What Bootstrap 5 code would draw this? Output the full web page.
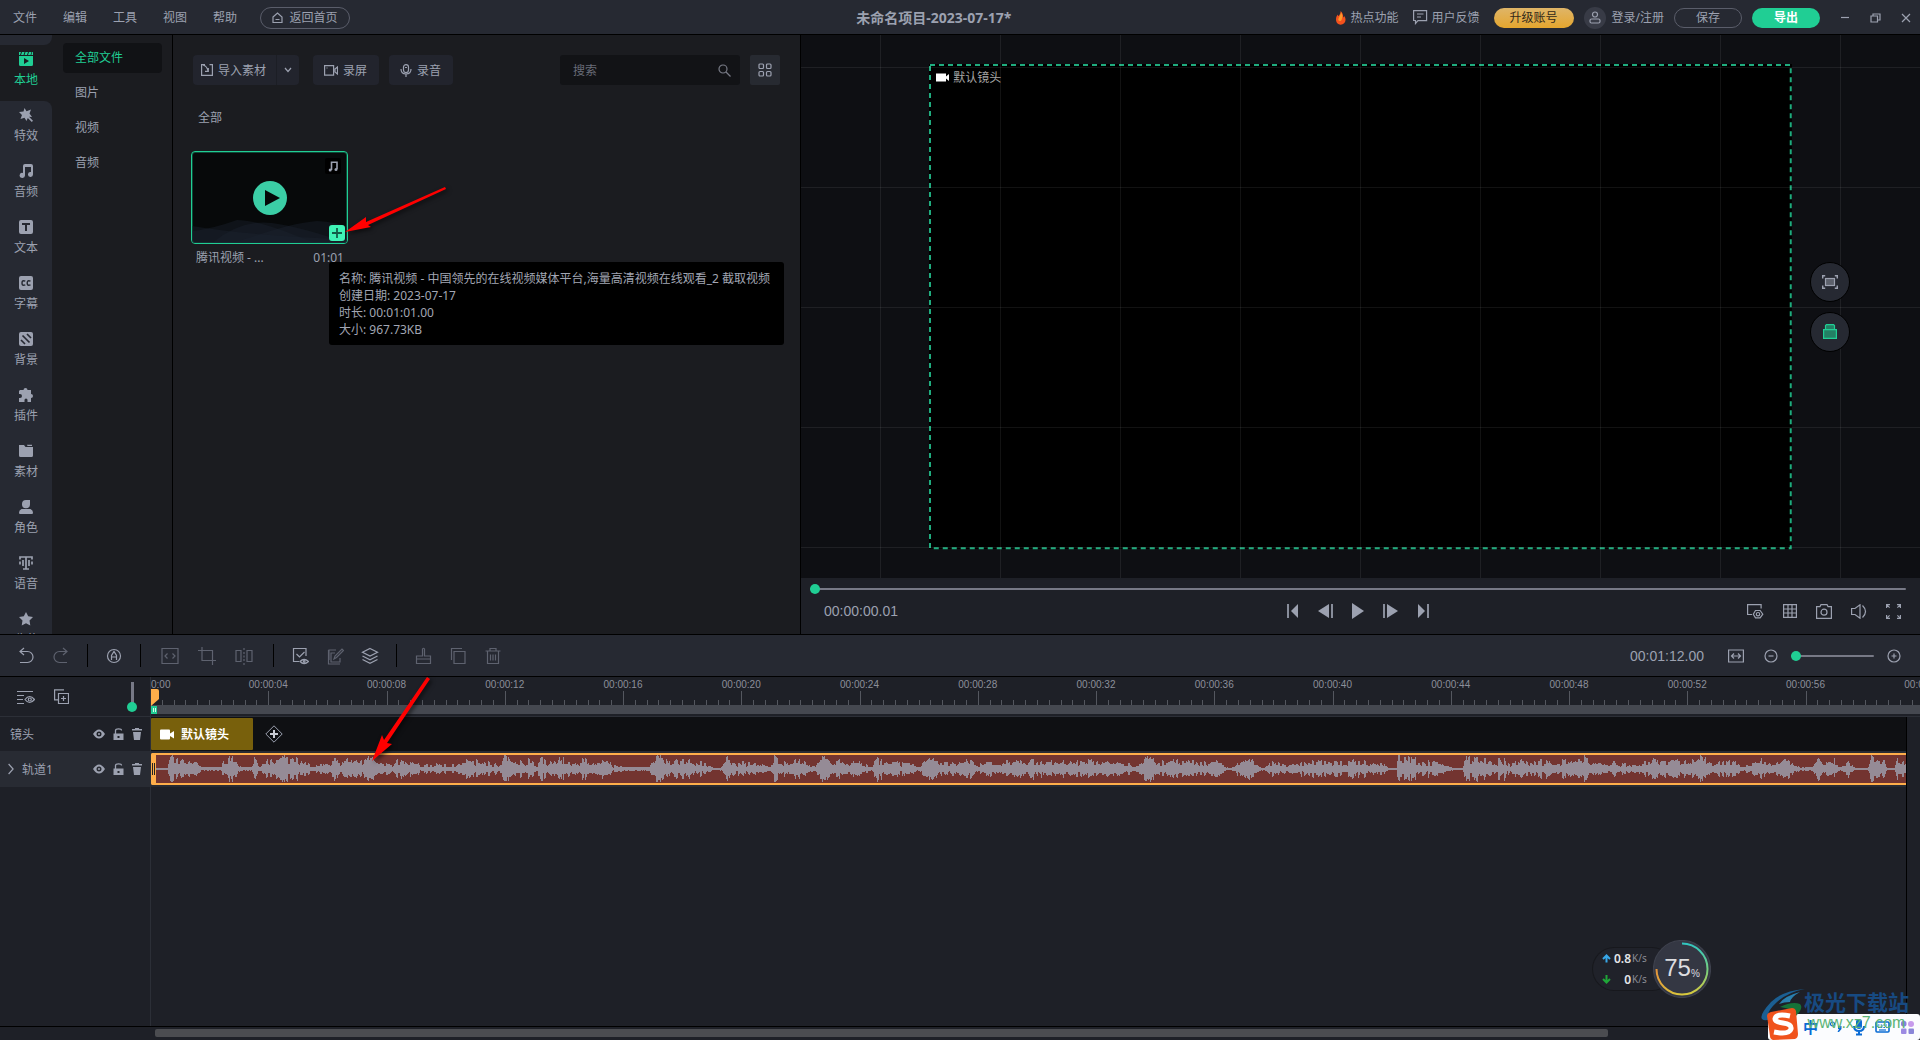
<!DOCTYPE html>
<html lang="zh-CN" data-bs-theme="dark">
<head>
<meta charset="utf-8">
<meta name="viewport" content="width=device-width, initial-scale=1">
<title>未命名项目-2023-07-17*</title>
<link rel="stylesheet" href="https://cdn.jsdelivr.net/npm/bootstrap@5.3.0/dist/css/bootstrap.min.css">
<style>
:root{--bar:#262932;--panel:#1b1c20;--deep:#0e0f13;--fg:#9ca1b0;--green:#20ce94;--orange:#ffae4a;--line:#2c2f37}
body{height:100vh;overflow:hidden;background:#1e2027;color:var(--fg);font:12px/17px "Noto Sans","Noto Sans CJK SC",sans-serif}
svg{display:block;flex:none;fill:none;stroke:currentColor;stroke-width:1.2}
svg.solid,.solid{fill:currentColor;stroke:none}
svg.flat{stroke:none}
button{font:inherit;color:inherit;background:none;border:0;padding:0}
a{color:inherit;text-decoration:none}
.latin{font-family:"Liberation Sans",sans-serif}
/* top bar */
.topbar{flex:none;height:35px;background:var(--bar);border-bottom:1px solid #000;padding-top:1px}
.menu-link{width:50px;padding-left:13px}
.pill{border:1px solid #5a5d6a;border-radius:11px;height:22px}
.home-pill{width:90px;gap:6px;margin-left:10px}
.gap-before{flex:506 1 0}.gap-after{flex:323 1 0}
.proj{font-size:14px;font-weight:700;margin:0;line-height:18px;color:var(--fg)}
.links-row{gap:14px}
.btn-row{gap:10px;padding-left:10px}
.upgrade{width:80px;height:20px;border-radius:10px;background:linear-gradient(#dfb568,#e5a62e);color:#33291a}
.avatar-dot{width:22px;height:22px;border-radius:50%;background:#383b46;margin-right:6px}
.save-pill{width:68px;height:20px}
.export{width:68px;height:20px;border-radius:10px;background:var(--green);color:#fff;font-weight:700}
.winbtns{gap:20px;margin-left:20px;padding-right:9px}
/* upper half */
.upper{flex:40 1 0;min-height:0}
.rail{width:52px;flex:none;background:var(--panel);overflow:hidden}
.rail-cap{height:10px;flex:none;background:var(--bar);border-bottom-right-radius:8px}
.rail-rest{background:var(--bar);border-top-right-radius:8px;flex:none}
.rail-btn{width:52px;height:56px;padding-top:7px;gap:5px;flex:none}
.rail-btn.on,.subnav a.active{color:var(--green)}
.subnav{width:121px;flex:none;background:var(--panel);border-right:1px solid #000;padding:8px 10px 0 11px}
.subnav a{display:block;height:30px;line-height:30px;margin-bottom:5px;padding-left:12px;border-radius:4px}
.subnav a.active{background:#111215}
.media{background:var(--panel);min-width:0;padding:20px 20px 0 20px}
.tbtn{background:#22242d;height:30px;border-radius:4px;gap:5px;padding:0 12px 0 11px}
.tbtn.first-part{width:84px;padding:0 0 0 8px;border-radius:4px 0 0 4px;border-right:1px solid #1c1e25}
.tbtn.drop-part{width:22px;padding:0;border-radius:0 4px 4px 0;margin-right:14px}
.tbtn.mic{margin-left:10px}
.searchbox{width:180px;height:30px;background:#121316;border-radius:3px;padding:0 9px 0 11px}
.searchbox input{background:none;border:0;outline:0;color:var(--fg);font:inherit;min-width:0}
.searchbox input::placeholder{color:#686c78;opacity:1}
.viewbtn{width:30px;height:30px;background:#272a31;border-radius:2px;margin-left:10px}
.all-label{margin:24px 0 0 5px;font:inherit;color:var(--fg)}
.clip-card{width:157px;margin:25px 0 0 -2px}
.thumb{height:93px;border:1px solid var(--green);box-shadow:inset 0 0 0 1px #0d4a38;border-radius:4px;background:#07090a;overflow:hidden}
.thumb>svg.hills{left:0;bottom:0;width:100%;height:26px}
.note-tag{right:6px;top:6px;width:16px;height:16px;background:#000;border-radius:2px}
.add-tag{right:2px;bottom:2px;width:16px;height:16px;background:#3ff3b5;border-radius:3px;color:#125d47}
.play-dot{color:#3bcea6}
.clip-meta{padding:5px 4px 0 5px}
.info-tip{left:329px;top:262px;width:455px;background:#000;border-radius:3px;padding:8px 10px 7px;color:#a2a6b3;white-space:nowrap;z-index:5}
/* preview */
.preview{border-left:1px solid #000;min-width:0}
.stage{flex:1 1 0;min-height:0;background:var(--deep)}
.stage::after{content:"";position:absolute;inset:0;pointer-events:none;background:linear-gradient(90deg,#ffffff12 1px,transparent 1px) 79px 0/120px 120px,linear-gradient(#ffffff12 1px,transparent 1px) 0 32px/120px 120px}
.frame{width:77.1%;aspect-ratio:16/9;background:#000;color:#a4a4a4}
.frame>svg.edge{inset:0;width:100%;height:100%;stroke:#1fac7e;stroke-width:2;overflow:visible}
.edge rect{width:calc(100% - 2px);height:calc(100% - 2px)}
.frame-label{padding:5px 7px;gap:4px}
.side-tools{right:70px;top:50%;transform:translateY(-50%);gap:10px;z-index:2}
.side-tools button{width:40px;height:40px;border-radius:50%;background:var(--bar);border:1px solid #000}
.player{height:56px;flex:none;background:#1e2027;padding:5px 14px 0 9px}
.player-row{display:grid;grid-template-columns:1fr auto 1fr;height:32px}
.player-row .timecode{padding-left:14px}
.transport{gap:19px}
.view-tools{gap:19px;padding-right:5px}
.timecode{font-size:14px;line-height:18px}
/* sliders */
input[type=range]{-webkit-appearance:none;appearance:none;background:none;height:12px;margin:0;display:block}
input[type=range]::-webkit-slider-runnable-track{height:2px;background:#777986;border-radius:1px}
input[type=range]::-webkit-slider-thumb{-webkit-appearance:none;width:10px;height:10px;margin-top:-4px;border-radius:50%;background:var(--green)}
.seek{width:100%}
.zoomr{width:83px;margin:0 13px!important}
.vslide{width:10px;height:30px}
.vslide i{width:3px;height:21px;background:#777986}
.vslide b{width:10px;height:10px;border-radius:50%;background:var(--green);margin-top:-1px}
/* lower half */
.lower{flex:27 1 0;min-height:0;border-top:1px solid #000}
.toolrow{height:42px;flex:none;background:var(--bar);border-bottom:1px solid #000;padding:0 19px 0 17px}
.toolset,.toolrow .grp{gap:17px}
.toolrow .grp-wide{gap:19px;padding:0 3px}
.toolrow .tb{width:18px;height:20px}
.tb.dim{color:#5e626f}
.vsep{width:1px;height:23px;background:#000}
.fitbtn{margin:0 20px 0 24px}
.heads{width:151px;flex:none;border-right:1px solid var(--line)}
.lane{flex:1 1 0;min-width:0;overflow:hidden}
.rulerrow{height:40px;flex:none;border-bottom:1px solid var(--line)}
.rulerrow .heads{padding:0 13px 0 17px;gap:19px}
.ticks{left:0;top:0;width:100%;height:29px;stroke:#54575f;stroke-width:1}
.labels{font-size:10px;line-height:13px;color:#8c8f9a;padding-top:1px}
.labels span{flex:none;text-align:center}
.labels span:first-child{text-align:left}
.rangebar{left:0;right:0;bottom:2px;height:9px;background:#454850}
.rangebar b{display:flex;gap:1px;justify-content:center;align-items:center;width:6px;height:8px;background:var(--green);margin-top:1px}
.rangebar b::before,.rangebar b::after{content:"";width:1px;height:4px;background:#d9f7ec}
.playhead{left:0;top:12px}
.trk{flex:none}
.trk .heads{padding:0 8px 0 10px}
.trk-shot{height:34px}.trk-shot .lane{background:#0f1013;padding:1px 0}
.trk-audio{height:36px}.trk-audio .heads,.trk-audio .lane{background:#282b33}
.trk-audio .heads{padding-left:8px}
.trk-audio .lane{padding:2px 0}
.tools3{gap:8px}
.gutter{width:14px;flex:none;border-left:1px solid #000;background:#1e2027}
.shot{width:102px;height:32px;background:#78600c;border-radius:1px;color:#fff;font-weight:700;padding-left:9px;gap:7px;margin-right:12px}
.wavebox{height:32px;background:#733430;border:2px solid var(--orange);border-right:0;border-left-width:5px;border-radius:2px 0 0 2px}
.wavebox svg{width:100%;height:28px;stroke:#958b96;stroke-width:1}
.grip{left:-4px;top:8px;width:3px;height:12px;border:solid #222;border-width:0 1px}
.hscroll{height:14px;flex:none;border-top:1px solid #000;padding:2px 0 0 155px}
.hscroll div{width:82.3%;height:8px;border-radius:2px;background:#4b4c50}
/* overlays */
.arrows{left:0;top:0;z-index:8;pointer-events:none;filter:drop-shadow(2px 2px 2px #0009)}
.netbox{right:209px;bottom:41px;width:118px;height:60px;z-index:9}
.netpill{left:0;top:9px;width:80px;height:42px;border-radius:21px;background:#20222a;box-shadow:0 0 0 1px #17181d;padding-left:9px}
.netpill div{height:21px}
.netpill strong{color:#e4e5e8;width:20px;text-align:right;font-weight:600;line-height:16px}
.netpill small{font-size:10px;color:#8b8d95;padding-left:1px}
.netdial{right:0;top:1px}
.pct{right:0;top:0;width:58px;height:58px;color:#dcdde0}
.pct span{font-size:24px;line-height:28px}
.pct small{font-size:10px;padding-top:10px}
.site{right:11px;bottom:8px;width:105px;color:#174a82;font:700 21px/26px "Noto Sans CJK SC",sans-serif;z-index:9;pointer-events:none}
.site em{display:block;font:normal 16px/18px "Liberation Sans",sans-serif;color:#5db476;text-align:center}
.ime{right:0;bottom:0;width:152px;height:26px;background:#fbfcfe;border-radius:3px;z-index:8;padding:0 6px 0 35px;color:#0a6bd4}
.ime b{font-size:15px;line-height:26px}
.logos{right:115px;bottom:0;z-index:10}
</style>
<script src="https://cdn.jsdelivr.net/npm/bootstrap@5.3.0/dist/js/bootstrap.bundle.min.js"></script>
</head>
<body class="d-flex flex-column position-relative">

<header class="topbar d-flex align-items-center">
  <nav class="d-flex align-items-center">
    <a href="#" class="menu-link">文件</a><a href="#" class="menu-link">编辑</a><a href="#" class="menu-link">工具</a><a href="#" class="menu-link">视图</a><a href="#" class="menu-link">帮助</a>
    <button class="pill home-pill d-flex align-items-center justify-content-center"><svg width="11" height="12"><path d="M1 5 5.500 1 10 5v5.500H1zM3.500 7.500h4"/></svg>返回首页</button>
  </nav>
  <div class="gap-before"></div>
  <h1 class="proj">未命名项目-2023-07-17*</h1>
  <div class="gap-after"></div>
  <div class="d-flex align-items-center">
    <div class="links-row d-flex align-items-center">
      <a href="#" class="d-flex align-items-center gap-1"><svg class="flat" width="12" height="14"><path fill="#f4511d" d="M5.500 0c.5 2-.5 3-2 5C2.800 4.800 3 4 2.800 3.500 1.500 5 1 6.500 1 8.500c0 3 2 5.200 4.700 5.200s4.800-2 4.800-4.900c0-1.800-.6-2.800-1.300-3.800-.2 1-.5 1.300-1 1.500C8.500 4 7.500 1.500 5.500 0z"/><path fill="#fb9a2a" d="M5.800 1c.6 3-2.500 5-2.500 8 1 2 3.500 1 3.500-1C8 6 7.500 3 5.800 1z"/></svg>热点功能</a>
      <a href="#" class="d-flex align-items-center gap-1"><svg width="15" height="15"><path d="M.6.6h13v10H5L2.500 13.500v-3H.6zM4 4h6.500M4 7h4"/></svg>用户反馈</a>
      <button class="upgrade">升级账号</button>
    </div>
    <div class="btn-row d-flex align-items-center">
      <a href="#" class="d-flex align-items-center"><span class="avatar-dot d-flex align-items-center justify-content-center"><svg width="12" height="13"><circle cx="6" cy="3.500" r="2.500"/><rect x="1" y="8" width="10" height="4" rx="1.500"/></svg></span>登录/注册</a>
      <button class="pill save-pill">保存</button>
      <button class="export">导出</button>
    </div>
    <div class="winbtns d-flex align-items-center">
      <button aria-label="最小化"><svg width="10" height="10"><path d="M1 4.500h8"/></svg></button>
      <button aria-label="还原"><svg width="11" height="10"><path d="M1 3h6.500v6H1zM3 3V1h7v6H7.500"/></svg></button>
      <button aria-label="关闭"><svg width="10" height="10"><path d="m1 1 8 8M9 1 1 9"/></svg></button>
    </div>
  </div>
</header>

<main class="upper d-flex">
  <section class="col-5 d-flex">
    <div class="rail d-flex flex-column">
      <div class="rail-cap"></div>
      <button class="rail-btn on d-flex flex-column align-items-center"><svg width="14" height="14" class="solid"><path d="M0 0h2l-1 3H0zM3 0h2.500l-1 3H2zM6.500 0H9L8 3H5.500zM10 0h2.500l-1 3H9zM13.200 0H14v3h-1.700z"/><path fill-rule="evenodd" d="M0 4h14v8.500q0 1.500-1.500 1.500h-11Q0 14 0 12.500zM5 6v6l5-3z"/></svg>本地</button>
      <div class="rail-rest">
        <button class="rail-btn d-flex flex-column align-items-center"><svg width="14" height="14" class="solid"><path d="M5.500 0 7.500 3.200 12 1.500 10.500 5.500 13 9l-3-.2 4 4-1.200 1.200-4-4L7.500 13 5.500 9.800 1.500 11 3 7 0 4l4.500-.5z"/></svg>特效</button>
        <button class="rail-btn d-flex flex-column align-items-center"><svg width="14" height="14" class="solid"><path fill-rule="evenodd" d="M4 2q0-2 2-2h6q2 0 2 2v8.500A2.500 2.500 0 1 1 12 8V3H6v8.500A2.700 2.500 0 1 1 4 9z"/></svg>音频</button>
        <button class="rail-btn d-flex flex-column align-items-center"><svg width="14" height="14" class="solid"><path fill-rule="evenodd" d="M2 0h10q2 0 2 2v10q0 2-2 2H2q-2 0-2-2V2Q0 0 2 0zM3 3v2h3v6h2V5h3V3z"/></svg>文本</button>
        <button class="rail-btn d-flex flex-column align-items-center"><svg width="14" height="14"><rect width="14" height="14" rx="2" class="solid"/><path stroke="#262932" stroke-width="1.400" d="M6.300 5.300Q5.500 4.700 4.500 4.700 3 4.700 3 7t1.500 2.300q1 0 1.800-.6M11.500 5.300q-.8-.6-1.800-.6Q8.200 4.700 8.200 7t1.500 2.300q1 0 1.800-.6"/></svg>字幕</button>
        <button class="rail-btn d-flex flex-column align-items-center"><svg width="14" height="14"><rect width="14" height="14" rx="2" class="solid"/><path stroke="#262932" stroke-width="1.700" d="m2 8 4 4M3.500 3.500l7 7M8 2l4 4"/></svg>背景</button>
        <button class="rail-btn d-flex flex-column align-items-center"><svg width="14" height="14" class="solid"><path d="M1 2h3.500a2 2 0 0 1 4 0H12v4a2 2 0 0 1 0 4v4H8.500v-2a1.500 1.500 0 0 0-3 0v2H0v-4h1a2 2 0 0 0 0-4H0V3z"/></svg>插件</button>
        <button class="rail-btn d-flex flex-column align-items-center"><svg width="14" height="14" class="solid"><path d="M0 1h5l1.500 2H14v8.500q0 1.500-1.500 1.500h-11Q0 13 0 11.500zM8 .8h5V2H8.500z"/></svg>素材</button>
        <button class="rail-btn d-flex flex-column align-items-center"><svg width="14" height="14" class="solid"><path d="M7 0h4v4.500A4 4 0 0 1 3 4q0-4 4-4zM2.500 9h9q2.500 1 2.500 3.500 0 1.500-1 1.500H1q-1 0-1-1.500Q0 10 2.500 9z"/></svg>角色</button>
        <button class="rail-btn d-flex flex-column align-items-center"><svg width="14" height="14"><path stroke-width="1.700" d="M1 3.500V1h12v2.500M7 1v12M4 13h6M4 4v6M10 4v6M1 5.500v3M13 5.500v3"/></svg>语音</button>
        <button class="rail-btn d-flex flex-column align-items-center"><svg width="14" height="14" class="solid"><path d="m7 0 2.200 4.300 4.800.7-3.500 3.400.8 5.100L7 11.200l-4.300 2.300.8-5.100L0 5l4.800-.7z"/></svg>收藏</button>
      </div>
    </div>
    <nav class="subnav">
      <a href="#" class="active">全部文件</a><a href="#">图片</a><a href="#">视频</a><a href="#">音频</a>
    </nav>
    <div class="media flex-grow-1">
      <div class="d-flex align-items-center">
        <button class="tbtn first-part d-flex align-items-center"><svg width="12" height="12"><path d="M4 .6H.6v10.800h10.800V.6H8.500M2 1q4 1 5 6M7.300 4v3.300H4"/></svg>导入素材</button><button class="tbtn drop-part d-flex align-items-center justify-content-center" aria-label="更多导入"><svg width="8" height="6"><path d="m1 1 3 3.500L7 1"/></svg></button>
        <button class="tbtn d-flex align-items-center"><svg width="14" height="11"><path d="M.6.6h9v9.500h-9zM2.500 3h1M11 4l2.500-2v7L11 7z"/></svg>录屏</button>
        <button class="tbtn mic d-flex align-items-center"><svg width="12" height="13"><rect x="3.500" y=".6" width="5" height="8" rx="2.500"/><path d="M1 5q0 5 5 5t5-5M6 10v3M5 3.500h2"/></svg>录音</button>
        <label class="searchbox d-flex align-items-center ms-auto"><input class="flex-grow-1" type="text" placeholder="搜索" aria-label="搜索"><svg width="13" height="13" color="#787b86"><circle cx="5" cy="5" r="4"/><path d="m8 8 4.500 4.500"/></svg></label>
        <button class="viewbtn d-flex align-items-center justify-content-center" aria-label="网格视图"><svg width="14" height="14"><rect x="1" y="1" width="4.500" height="4.500" rx="1"/><rect x="8.500" y="1" width="4.500" height="4.500" rx="1"/><rect x="1" y="8.500" width="4.500" height="4.500" rx="1"/><rect x="8.500" y="8.500" width="4.500" height="4.500" rx="1"/></svg></button>
      </div>
      <h2 class="all-label">全部</h2>
      <div class="clip-card">
        <div class="thumb position-relative d-flex align-items-center justify-content-center">
          <svg class="hills flat position-absolute" viewBox="0 0 155 26" preserveAspectRatio="none"><g fill="#1b2230" fill-opacity=".4"><path d="M0 14Q20 12 45 3q20 0 60 16t50 2v5H0z"/><path d="M20 26Q50 2 80 6t75 20z"/><path d="M60 20Q100 6 125 4q20 1 30 6v16H40z"/><path d="M0 9q60 10 155 13v4H0z"/></g></svg>
          <svg class="play-dot flat position-relative" width="34" height="34"><circle cx="17" cy="17" r="17" class="solid"/><path fill="#050808" d="M12 9v16l15-8z"/></svg>
          <span class="note-tag position-absolute d-flex align-items-center justify-content-center"><svg width="10" height="11"><path stroke-width="1.600" d="M3.500 9V1.200h5.500V8"/><circle cx="2.200" cy="9" r="1.500" class="solid"/><circle cx="8" cy="8.500" r="1.500" class="solid"/></svg></span>
          <button class="add-tag position-absolute d-flex align-items-center justify-content-center" aria-label="添加到轨道"><svg width="10" height="10"><path stroke-width="1.800" d="M5 0v10M0 5h10"/></svg></button>
        </div>
        <div class="clip-meta d-flex justify-content-between"><span>腾讯视频 - ...</span><span>01:01</span></div>
      </div>
    </div>
  </section>

  <section class="preview flex-grow-1 d-flex flex-column">
    <div class="stage position-relative d-flex align-items-center justify-content-center">
      <div class="frame position-relative">
        <svg class="edge position-absolute"><rect x="1" y="1" stroke-dasharray="5 4"/></svg>
        <div class="frame-label d-flex align-items-center"><svg width="13" height="9" class="solid" color="#fff"><path d="M0 .5h10v8H0zM10 3.500 13 1v7l-3-2.500z"/></svg>默认镜头</div>
      </div>
      <div class="side-tools position-absolute d-flex flex-column">
        <button class="d-flex align-items-center justify-content-center" aria-label="适应画面"><svg width="16" height="14"><path stroke-width="1.500" d="M.7 3.500V.7h2.500M12.800.7h2.500v2.800M.7 10.500v2.800h2.500M12.800 13.300h2.500v-2.800"/><rect x="3.500" y="3.500" width="9" height="7" fill="#5d616c"/></svg></button>
        <button class="d-flex align-items-center justify-content-center" aria-label="锁定"><svg width="14" height="15" color="#20ce94"><g fill="#238064"><path d="M2.500 5.500v-4l1-.9h7l1 .9v4z"/><path d="M.6 5.600h12.800v8.800H.6z"/></g></svg></button>
      </div>
    </div>
    <div class="player">
      <input class="seek" type="range" min="0" max="72" value="0" aria-label="播放进度">
      <div class="player-row align-items-center">
        <span class="timecode latin">00:00:00.01</span>
        <div class="transport d-flex align-items-center">
          <button aria-label="到开头"><svg width="12" height="14"><path stroke-width="1.700" d="M1 0v14"/><path class="solid" d="M11 0v14L4 7z"/></svg></button>
          <button aria-label="上一帧"><svg width="15" height="14"><path class="solid" d="M11 0v14L0 7z"/><path stroke-width="1.700" d="M14 0v14"/></svg></button>
          <button aria-label="播放"><svg width="12" height="16" class="solid"><path d="M0 0v16l12-8z"/></svg></button>
          <button aria-label="下一帧"><svg width="15" height="14"><path class="solid" d="M4 0v14l11-7z"/><path stroke-width="1.700" d="M1 0v14"/></svg></button>
          <button aria-label="到结尾"><svg width="12" height="14"><path stroke-width="1.700" d="M11 0v14"/><path class="solid" d="M1 0v14l7-7z"/></svg></button>
        </div>
        <div class="view-tools d-flex align-items-center justify-content-end">
          <button aria-label="预览设置"><svg width="17" height="15"><path d="M5 10.500H.6V.6h13.500v4"/><path d="m8.500 6.500-2.200 3.700 2.200 3.700h4.600l2.700-3.700-2.700-3.700z"/><circle cx="11" cy="10.200" r="1.700"/></svg></button>
          <button aria-label="网格"><svg width="14" height="14"><path d="M.6.6h12.800v12.800H.6zM5 .6v12.800M9 .6v12.800M.6 5h12.800M.6 9h12.800"/></svg></button>
          <button aria-label="截图"><svg width="16" height="15"><path d="M.6 2.600H4L5 .6h6l1 2h3.400v11.800H.6z"/><circle cx="8" cy="8.200" r="3"/></svg></button>
          <button aria-label="音量"><svg width="16" height="15"><path d="M.6 4.500H4L9 .8v13.400L4 10.500H.6zM11.500 1.500q6 6 0 12"/></svg></button>
          <button aria-label="全屏"><svg width="15" height="15"><path d="M.6 4V.6H4M.6.6l3 3M11 .6h3.400V4M14.400.6l-3 3M.6 11v3.400H4M.6 14.400l3-3M14.400 11v3.400H11M14.400 14.400l-3-3"/></svg></button>
        </div>
      </div>
    </div>
  </section>
</main>

<section class="lower d-flex flex-column">
  <div class="toolrow d-flex align-items-center">
    <div class="toolset d-flex align-items-center">
      <div class="grp d-flex">
        <button class="tb" aria-label="撤销"><svg width="18" height="18"><path d="M7 1 3 4.500 7 8M3.500 4.500h7a5.500 5.500 0 0 1 0 11H3"/></svg></button>
        <button class="tb dim" aria-label="重做"><svg width="18" height="18"><path d="M11 1l4 3.500L11 8M14.500 4.500h-7a5.500 5.500 0 0 0 0 11H15"/></svg></button>
      </div>
      <i class="vsep"></i>
      <button class="tb" aria-label="自动"><svg width="18" height="18"><circle cx="9" cy="9" r="6.500"/><path d="M6.500 13V8.500L9 4.500l2.500 4V13M6.500 10h5"/></svg></button>
      <i class="vsep"></i>
      <div class="grp-wide d-flex">
        <button class="tb dim" aria-label="代码"><svg width="18" height="18"><path d="M1 1.500h16v15H1zM6.500 6.500 4 9l2.500 2.500M11.500 6.500 14 9l-2.500 2.500"/></svg></button>
        <button class="tb dim" aria-label="裁剪"><svg width="18" height="18"><path d="M4 0v13.500h14M0 3.500h14.500V18"/></svg></button>
        <button class="tb dim" aria-label="分割"><svg width="18" height="18"><path d="M6 3.500H1v11h5zM12 3.500h5v11h-5zM9 1v2M9 5v2M9 8.500v2M9 12v2M9 16v2"/></svg></button>
      </div>
      <i class="vsep"></i>
      <div class="grp d-flex">
        <button class="tb" aria-label="可见"><svg width="18" height="18"><path d="M8 14.500H2.500V1.500h12.500V9M5.500 7l3 3 5-5M9 14.500q4-4 8.500 0-4.500 4-8.500 0z"/><circle cx="13.200" cy="14.500" r=".8"/></svg></button>
        <button class="tb dim" aria-label="编辑"><svg width="18" height="18"><path d="M9 6H5v9h9v-4M3 13V3h7M2.500 3v14H14M8 12l1-3 7-7 1.500 1.500-7 7z"/></svg></button>
        <button class="tb" aria-label="图层"><svg width="18" height="18"><path d="m9 1.500 7.500 3.700L9 9 1.500 5.200zM1.500 9 9 12.800 16.500 9M1.500 12.500 9 16.300l7.500-3.800"/></svg></button>
      </div>
      <i class="vsep"></i>
      <div class="grp d-flex">
        <button class="tb dim" aria-label="样式"><svg width="18" height="18"><path d="M8.500 9V2q1-1.500 2 0v7h6v7.500h-14V9zM2.500 12h14"/></svg></button>
        <button class="tb dim" aria-label="复制"><svg width="18" height="18"><path d="M5 4.500h11v12H5zM2.500 13V1.500H13"/></svg></button>
        <button class="tb dim" aria-label="删除"><svg width="18" height="18"><path d="M1.500 4h15M6 3.500v-2h6v2M3.500 4v12.500h11V4M6.500 7.500v6M9 7.500v6M11.500 7.500v6"/></svg></button>
      </div>
    </div>
    <div class="d-flex align-items-center ms-auto">
      <span class="timecode latin">00:01:12.00</span>
      <button class="fitbtn" aria-label="适应宽度"><svg width="16" height="14"><path d="M.6 1h14.800v12H.6zM4 7h8M6 4.500 3.500 7 6 9.500M10 4.500 12.500 7 10 9.500"/></svg></button>
      <button aria-label="缩小"><svg width="14" height="14"><circle cx="7" cy="7" r="6"/><path d="M4.500 7h5"/></svg></button>
      <input class="zoomr" type="range" min="0" max="100" value="0" aria-label="时间线缩放">
      <button aria-label="放大"><svg width="14" height="14"><circle cx="7" cy="7" r="6"/><path d="M4.500 7h5M7 4.500v5"/></svg></button>
    </div>
  </div>

  <div class="rulerrow d-flex">
    <div class="heads d-flex align-items-center">
      <button aria-label="轨道显示"><svg width="18" height="16"><path d="M0 2.500h16M0 6.500h7M0 10.500h6M0 14.500h7M8 10.500q4.500-6 9.500 0-5 6-9.500 0z"/><circle cx="12.800" cy="10.500" r="1.500"/></svg></button>
      <button aria-label="添加轨道"><svg width="15" height="16"><path d="M4.500 4.500h10v10h-10zM10 .8H.6v10h4M9.500 7v5M7 9.500h5"/></svg></button>
      <div class="vslide ms-auto d-flex flex-column align-items-center"><i></i><b></b></div>
    </div>
    <div class="lane position-relative">
      <svg class="ticks position-absolute" id="ticks" shape-rendering="crispEdges"></svg>
      <div class="labels latin d-flex" id="labels"></div>
      <div class="rangebar position-absolute"><b></b></div>
      <svg class="playhead flat position-absolute" width="8" height="17"><path fill="#ffae4a" d="M0 0h6q2 0 2 2v8l-8 7z"/></svg>
    </div>
  </div>

  <div class="trk trk-shot d-flex">
    <div class="heads d-flex align-items-center"><span>镜头</span>
      <div class="tools3 d-flex align-items-center ms-auto" data-tools></div></div>
    <div class="lane d-flex align-items-center">
      <div class="shot d-flex align-items-center"><svg width="14" height="11" class="solid"><path d="M1 .5h8q1 0 1 1v8q0 1-1 1H1q-1 0-1-1v-8q0-1 1-1zM10 4.500 14 2v7.500L10 7z"/></svg>默认镜头</div>
      <button aria-label="添加镜头"><svg width="18" height="18"><path d="m9 .8 8.200 8.200L9 17.200.8 9z" stroke-width="1"/><path stroke="#c9ccd4" stroke-width="2" d="M9 5v8M5 9h8"/></svg></button>
    </div>
    <div class="gutter"></div>
  </div>
  <div class="trk trk-audio d-flex">
    <div class="heads d-flex align-items-center"><svg width="6" height="12" class="me-2"><path d="m.6 1 4.500 5L.6 11"/></svg><span>轨道1</span>
      <div class="tools3 d-flex align-items-center ms-auto" data-tools></div></div>
    <div class="lane"><div class="wavebox position-relative"><i class="grip position-absolute"></i><svg id="wave" shape-rendering="crispEdges"></svg></div></div>
    <div class="gutter"></div>
  </div>
  <div class="d-flex flex-grow-1">
    <div class="heads"></div><div class="lane"></div><div class="gutter"></div>
  </div>
  <div class="hscroll"><div></div></div>
</section>

<div class="info-tip position-absolute">名称: 腾讯视频 - 中国领先的在线视频媒体平台,海量高清视频在线观看_2 截取视频<br>创建日期: 2023-07-17<br>时长: 00:01:01.00<br>大小: 967.73KB</div>

<svg class="arrows flat position-absolute" width="460" height="780"><g fill="#f00"><path d="m345 232 21-15v5l79-35 1 2-78 36 3 2z"/><path d="m372 761 10-26 2 5 43-63 3 2-43 64 5 1z"/></g></svg>

<div class="netbox position-absolute">
  <div class="netpill position-absolute">
    <div class="d-flex align-items-center"><svg width="9" height="9" color="#37a7e8"><path stroke-width="2" d="M4.500 8.500V2M1 5l3.500-3.500L8 5"/></svg><strong>0.8</strong><small>K/s</small></div>
    <div class="d-flex align-items-center"><svg width="9" height="9" color="#1fa638"><path stroke-width="2" d="M4.500 0v7M1 4l3.500 3.500L8 4"/></svg><strong>0</strong><small>K/s</small></div>
  </div>
  <svg class="netdial flat position-absolute" width="58" height="58"><defs><linearGradient id="dial" x1="0" y1="0" x2="0" y2="1"><stop offset="0" stop-color="#31c6c0"/><stop offset=".55" stop-color="#7ccf7c"/><stop offset="1" stop-color="#d9c93c"/></linearGradient><linearGradient id="dial2" x1="0" y1="0" x2="1" y2="1"><stop offset="0" stop-color="#e5943a"/><stop offset="1" stop-color="#d9c93c"/></linearGradient></defs><circle cx="29" cy="29" r="28.500" fill="#343743" stroke="#3e414d"/><path stroke="url(#dial)" stroke-width="2" d="M29 3.500a25.500 25.500 0 0 1 0 51"/><path stroke="url(#dial2)" stroke-width="2" d="M3.500 29A25.500 25.500 0 0 0 29 54.500"/></svg>
  <div class="pct position-absolute d-flex align-items-center justify-content-center latin"><span>75</span><small>%</small></div>
</div>

<div class="ime position-absolute d-flex align-items-center justify-content-between">
  <b>中</b>
  <svg width="14" height="14"><circle cx="3.500" cy="4" r="2"/><path class="solid" d="M9 6h3.500v3L10 12H8.500L10 9H9z"/></svg>
  <svg width="12" height="18"><rect x="3" y="1" width="6" height="10" rx="3" class="solid"/><path stroke-width="2" d="M1 8q0 5 5 5t5-5M6 13v3M3 16.500h6"/></svg>
  <svg width="15" height="12"><rect x="1" y="1" width="13" height="10" rx="1" stroke-width="1.600"/><path stroke-dasharray="1.500 1.200" d="M3 4h9M3 6.500h9"/><path d="M4 9h7"/></svg>
  <svg class="flat" width="13" height="13"><rect width="5.500" height="5.500" rx="2" fill="#8d7fe0"/><circle cx="10" cy="3" r="3" fill="#c79aec"/><rect y="7.500" width="5.500" height="5.500" rx="1" fill="#9c8ae2"/><rect x="7.500" y="7.500" width="5.500" height="5.500" rx="1" fill="#8a86d8"/></svg>
</div>
<svg class="logos flat position-absolute" width="45" height="52">
  <path fill="#1b5f93" d="M45 1Q22 3 11 14-1 27 2 31q3 3 11-1Q2 28 17 14 28 4 45 1z"/><path fill="#2a7fae" d="M40 4Q24 8 19 16q5-2 11-2Q31 9 40 4z"/>
  <path fill="#167238" d="M20 19q12-6 20-3 4 4-4 12Q26 38 8 40q14-4 22-12 6-7-10-9z"/>
  <path fill="#f0531c" d="m11 24 21-4q3 0 4 3l2 23q0 4-3 5l-22 1q-3-1-3-4L7 28q0-3 4-4z"/><path stroke="#fff" stroke-width="5" d="M30 28q-14-3-15 3 0 3 8 4 9 1 8 6-2 6-17 3"/>
</svg>
<div class="site position-absolute">极光下载站<em>www.xz7.com</em></div>

<script>
/* per-track tools: visibility, lock, delete */
document.querySelectorAll('[data-tools]').forEach(function (el) {
  el.innerHTML =
    '<button aria-label="显示"><svg width="12" height="10" class="solid"><path fill-rule="evenodd" d="M0 5q6-9 12 0-6 9-12 0zM6 2.500a2.500 2.500 0 1 0 0 5 2.500 2.500 0 0 0 0-5zM6 4a1 1 0 1 1 0 2 1 1 0 0 1 0-2z"/></svg></button>' +
    '<button aria-label="锁定"><svg width="11" height="12"><path stroke-width="1.300" d="M2.500 6V2.500q0-1.700 3-1.700t3 1.700"/><path class="solid" fill-rule="evenodd" d="M.5 5.500h10V12H.5zM4.500 8v2h2V8z"/></svg></button>' +
    '<button aria-label="删除"><svg width="10" height="12" class="solid"><path d="M3 0h4v1h3v1.500H0V1h3zM1 4h8l-1 8H2z"/></svg></button>';
});

/* ruler: one major mark every four seconds, ten divisions each */
var STEP = 118.25, marks = '', labels = '';
for (var i = 1; i < 400; i++) {
  var x = Math.round(i * STEP / 10) - 1 + 0.5;
  marks += 'M' + x + ' ' + (i % 10 ? 23 : 14) + 'V29';
}
for (var s = 0; s <= 60; s += 4) {
  var t = s === 0 ? '0:00' : s === 60 ? '00:01:00' : '00:00:' + String(s).padStart(2, '0');
  labels += '<span style="width:' + (s ? STEP : STEP / 2 - 1) + 'px">' + t + '</span>';
}
document.getElementById('ticks').innerHTML = '<path d="' + marks + '"/>';
document.getElementById('labels').innerHTML = labels;

/* waveform: loudness envelope as [position, level] pairs */
var A = [0,1,30,1,36,14,45,9,80,8,90,2,125,2,130,8,145,14,155,6,165,2,180,2,185,12,195,4,205,8,235,13,245,10,270,10,290,4,300,3,310,9,320,9,380,8,387,13,400,9,420,7,430,4,440,9,470,8,480,4,540,5,550,8,600,8,620,4,632,14,645,9,680,9,690,6,697,13,710,6,735,12,750,5,775,11,785,5,815,10,825,3,880,2,895,5,903,14,910,11,925,8,960,10,990,5,1005,1,1018,2,1025,13,1040,5,1080,8,1105,2,1112,14,1130,6,1150,10,1185,4,1197,13,1215,8,1230,8,1245,4,1260,10,1285,2,1295,12,1310,6,1350,7,1370,3,1387,11,1410,6,1440,8,1455,10,1480,5,1500,8,1530,9,1567,7];
var B = [0,8,100,9,150,6,175,5,190,3,205,13,220,9,330,8,350,1,362,3,370,10,400,8,410,1,430,8,450,4,500,9,540,7,570,8,600,6,620,6,632,1,645,1,648,14,670,12,690,8,720,6,740,2,760,1,767,13,785,12,800,11,825,9,835,9,845,4,865,9,890,8,950,8,980,11,1000,6,1030,7,1060,4,1080,8,1110,10,1150,9,1170,8,1182,13,1200,7,1240,7,1260,4,1285,9,1310,5,1335,9,1355,3,1375,2,1388,11,1400,6,1415,12,1425,4,1440,8,1450,2,1475,1,1481,14,1490,9,1505,8,1510,1,1522,1,1527,10,1545,7];
var env = [], k;
for (k = 0; k < A.length; k += 2) env.push([A[k] / 1.782 - 6, A[k + 1]]);
for (k = 0; k < B.length; k += 2) env.push([874 + B[k] / 1.762, B[k + 1]]);
var seed = 7, d = '', j = 0, hold = 1;
function rnd() { seed = (seed * 16807) % 2147483647; return seed / 2147483647; }
for (var px = 0; px < 1750; px++) {
  while (j < env.length - 2 && env[j + 1][0] < px) j++;
  var p = env[j], q = env[j + 1], f = Math.min(1, Math.max(0, (px - p[0]) / (q[0] - p[0])));
  var a = p[1] + (q[1] - p[1]) * f;
  if (px % 2 === 0) hold = 0.4 + 0.75 * rnd();
  var n = a < 2.5 ? 0.8 : hold * (0.85 + 0.3 * rnd());
  if (Math.abs(px - p[0]) < 1.5 && p[1] > 10) n = 1;
  var up = Math.max(1, Math.min(14, Math.round(a * n))), dn = Math.max(1, Math.min(13, Math.round(a * n * (0.75 + 0.35 * rnd()))));
  d += 'M' + (px + 0.5) + ' ' + (14 - up) + 'V' + (14 + dn);
}
document.getElementById('wave').innerHTML = '<path d="' + d + '"/>';
</script>
</body>
</html>
